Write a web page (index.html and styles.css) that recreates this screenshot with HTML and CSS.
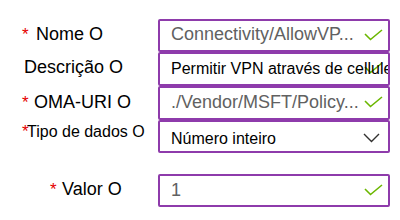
FILE: index.html
```html
<!DOCTYPE html>
<html lang="pt">
<head>
<meta charset="utf-8">
<title>Configuração OMA-URI</title>
<link rel="stylesheet" href="styles.css">
</head>
<body>
<div class="form">
  <div class="row">
    <div class="label l-nome"><span class="req req-14">*</span>Nome O</div>
    <div class="field f-nome">
      <span class="val muted">Connectivity/AllowVP...</span>
      <svg class="check" width="19" height="12" viewBox="0 0 19 12"><polyline points="1,5 6.5,10.5 18,1" /></svg>
    </div>
  </div>
  <div class="row tall">
    <div class="label l-desc">Descrição O</div>
    <div class="field f-desc">
      <svg class="check" width="19" height="12" viewBox="0 0 19 12"><polyline points="1,5 6.5,10.5 18,1" /></svg>
      <span class="val small">Permitir VPN através de cellule</span>
    </div>
  </div>
  <div class="row tall">
    <div class="label l-oma"><span class="req req-12">*</span>OMA-URI O</div>
    <div class="field f-oma">
      <span class="val muted">./Vendor/MSFT/Policy...</span>
      <svg class="check" width="19" height="12" viewBox="0 0 19 12"><polyline points="1,5 6.5,10.5 18,1" /></svg>
    </div>
  </div>
  <div class="row">
    <div class="label l-tipo"><span class="req req-5">*</span>Tipo de dados O</div>
    <div class="field f-tipo">
      <span class="val small">Número inteiro</span>
      <svg class="chevron" width="17" height="10" viewBox="0 0 17 10"><polyline points="1,1 8.5,8.5 16,1" /></svg>
    </div>
  </div>
  <div class="row spaced">
    <div class="label l-valor"><span class="req req-12">*</span>Valor O</div>
    <div class="field f-valor">
      <span class="val muted">1</span>
      <svg class="check" width="19" height="12" viewBox="0 0 19 12"><polyline points="1,5 6.5,10.5 18,1" /></svg>
    </div>
  </div>
</div>
</body>
</html>
```

FILE: styles.css
```css
html, body {
  margin: 0;
  padding: 0;
  background: #ffffff;
}

body {
  font-family: "Liberation Sans", Arial, sans-serif;
  color: #000000;
}

.form {
  display: flex;
  flex-direction: column;
  padding-top: 19px;
}

.row {
  display: flex;
  height: 33px;
}

.row.tall {
  height: 34px;
}

.row.spaced {
  margin-top: 21px;
}

.label {
  width: 158px;
  box-sizing: border-box;
  display: flex;
  align-items: center;
  font-size: 18px;
  white-space: nowrap;
}

.l-nome { padding-left: 22px; padding-bottom: 2px; }
.l-desc { padding-left: 24px; padding-bottom: 4px; }
.l-oma { padding-left: 22px; padding-bottom: 2px; }
.l-tipo { padding-left: 22px; padding-bottom: 10px; font-size: 16px; }
.l-valor { padding-left: 50px; padding-bottom: 2px; }

.req {
  display: inline-block;
  color: #e50000;
  font-size: 17px;
  line-height: 1;
  align-self: center;
}

.req-14 { width: 14px; }
.req-12 { width: 12px; }
.req-5 { width: 5px; }

.field {
  width: 232px;
  box-sizing: border-box;
  border: 2px solid #8e3bab;
  border-radius: 2px;
  padding: 0 11px;
  display: flex;
  align-items: center;
  position: relative;
  overflow: hidden;
  white-space: nowrap;
}

.f-nome { padding-bottom: 3px; }
.f-oma { padding-bottom: 2px; }
.f-tipo { padding-top: 4px; }

.val {
  position: relative;
  z-index: 1;
  font-size: 18px;
}

.val.muted {
  color: #616161;
}

.val.small {
  font-size: 16px;
  color: #000000;
}

.check {
  position: absolute;
  right: 5px;
  top: 50%;
  margin-top: -7px;
  fill: none;
  stroke: #6bb700;
  stroke-width: 1.6;
}

.chevron {
  position: absolute;
  right: 8px;
  top: 50%;
  margin-top: -4px;
  fill: none;
  stroke: #323130;
  stroke-width: 1.4;
}
```
